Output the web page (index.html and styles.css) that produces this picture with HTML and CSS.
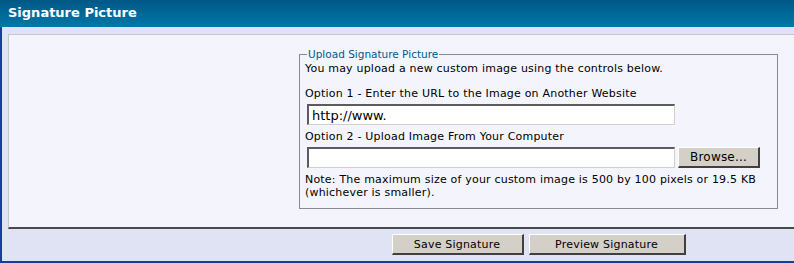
FILE: index.html
```html
<!DOCTYPE html>
<html lang="en">
<head>
  <meta charset="UTF-8" />
  <title>Signature Picture</title>
  <link rel="stylesheet" href="styles.css">
</head>
<body>
  <div class="window">
    <div class="title-bar">Signature Picture</div>
    <div class="panel">
      <div class="side"></div>
      <fieldset class="upload-box">
        <legend>Upload Signature Picture</legend>
        <p class="intro">You may upload a new custom image using the controls below.</p>
        <label class="option" for="sigUrl">Option 1 - Enter the URL to the Image on Another Website</label>
        <input type="text" id="sigUrl" class="url-input" value="http://www." />
        <label class="option second" for="sigFile">Option 2 - Upload Image From Your Computer</label>
        <div class="file-row">
          <input type="text" id="sigFile" class="file-input" />
          <button type="button" class="btn browse">Browse...</button>
        </div>
        <p class="note">Note: The maximum size of your custom image is 500 by 100 pixels or 19.5 KB (whichever is smaller).</p>
      </fieldset>
    </div>
    <div class="footer">
      <div class="side"></div>
      <div class="actions">
        <button type="button" class="btn save">Save Signature</button>
        <button type="button" class="btn preview">Preview Signature</button>
      </div>
    </div>
  </div>
</body>
</html>
```

FILE: styles.css
```css
* {
  margin: 0;
  padding: 0;
  box-sizing: border-box;
}

body {
  font-family: 'DejaVu Sans', Verdana, sans-serif;
  font-size: 11px;
  letter-spacing: 0.2px;
  color: #000;
  background-color: #ffffff;
}

.window {
  width: 794px;
  height: 263px;
  background-color: #dfe3f4;
  border-left: 2px solid #1a3aa6;
  border-bottom: 2px solid #1a3aa6;
}

.title-bar {
  height: 27px;
  margin-left: -2px;
  padding: 5px 0 0 8px;
  background: linear-gradient(to bottom, #005887, #0078a8);
  color: #ffffff;
  font-size: 13px;
  font-weight: bold;
  letter-spacing: 0;
}

.panel {
  display: grid;
  grid-template-columns: 290px 479px;
  margin: 7px 0 0 6px;
  height: 195px;
  padding-top: 13px;
  background-color: #f4f5fc;
  border-top: 1px solid #c6c6cc;
  border-left: 1px solid #c6c6cc;
  border-bottom: 2px solid #4a4a4a;
}

.upload-box {
  border: 1px solid #8a8a8a;
  padding: 0 5px 0 5px;
  height: 161px;
}

.upload-box legend {
  margin-left: 2px;
  padding: 0 1px;
  color: #005a8c;
  font-size: 10.5px;
  letter-spacing: 0;
}

.intro {
  margin-top: 2px;
  line-height: 13px;
}

.option {
  display: block;
  line-height: 13px;
  margin-top: 12px;
}

.option.second {
  margin-top: 5px;
}

.url-input,
.file-input {
  display: block;
  width: 368px;
  height: 21px;
  margin: 4px 0 0 2px;
  padding: 0 3px;
  font-family: 'DejaVu Sans', Verdana, sans-serif;
  font-size: 13px;
  background-color: #ffffff;
  border-top: 2px solid #5c5c5c;
  border-left: 2px solid #5c5c5c;
  border-right: 1px solid #d4d0c8;
  border-bottom: 1px solid #d4d0c8;
  outline: none;
}

.file-row {
  display: flex;
  gap: 3px;
  align-items: flex-start;
  margin-top: 4px;
}

.file-row .file-input {
  margin-top: 0;
}

.btn {
  height: 21px;
  font-family: 'DejaVu Sans', Verdana, sans-serif;
  font-size: 11px;
  letter-spacing: 0.2px;
  color: #000;
  background-color: #d4d0c8;
  border-top: 1px solid #ffffff;
  border-left: 1px solid #ffffff;
  border-right: 2px solid #404040;
  border-bottom: 2px solid #404040;
  cursor: pointer;
}

.browse {
  width: 82px;
  font-size: 12px;
}

.note {
  margin-top: 5px;
  line-height: 13px;
}

.footer {
  display: grid;
  grid-template-columns: 290px 479px;
  padding: 5px 0 0 7px;
}

.actions {
  display: flex;
  justify-content: center;
  gap: 5px;
}

.save {
  width: 132px;
}

.preview {
  width: 157px;
}
```
